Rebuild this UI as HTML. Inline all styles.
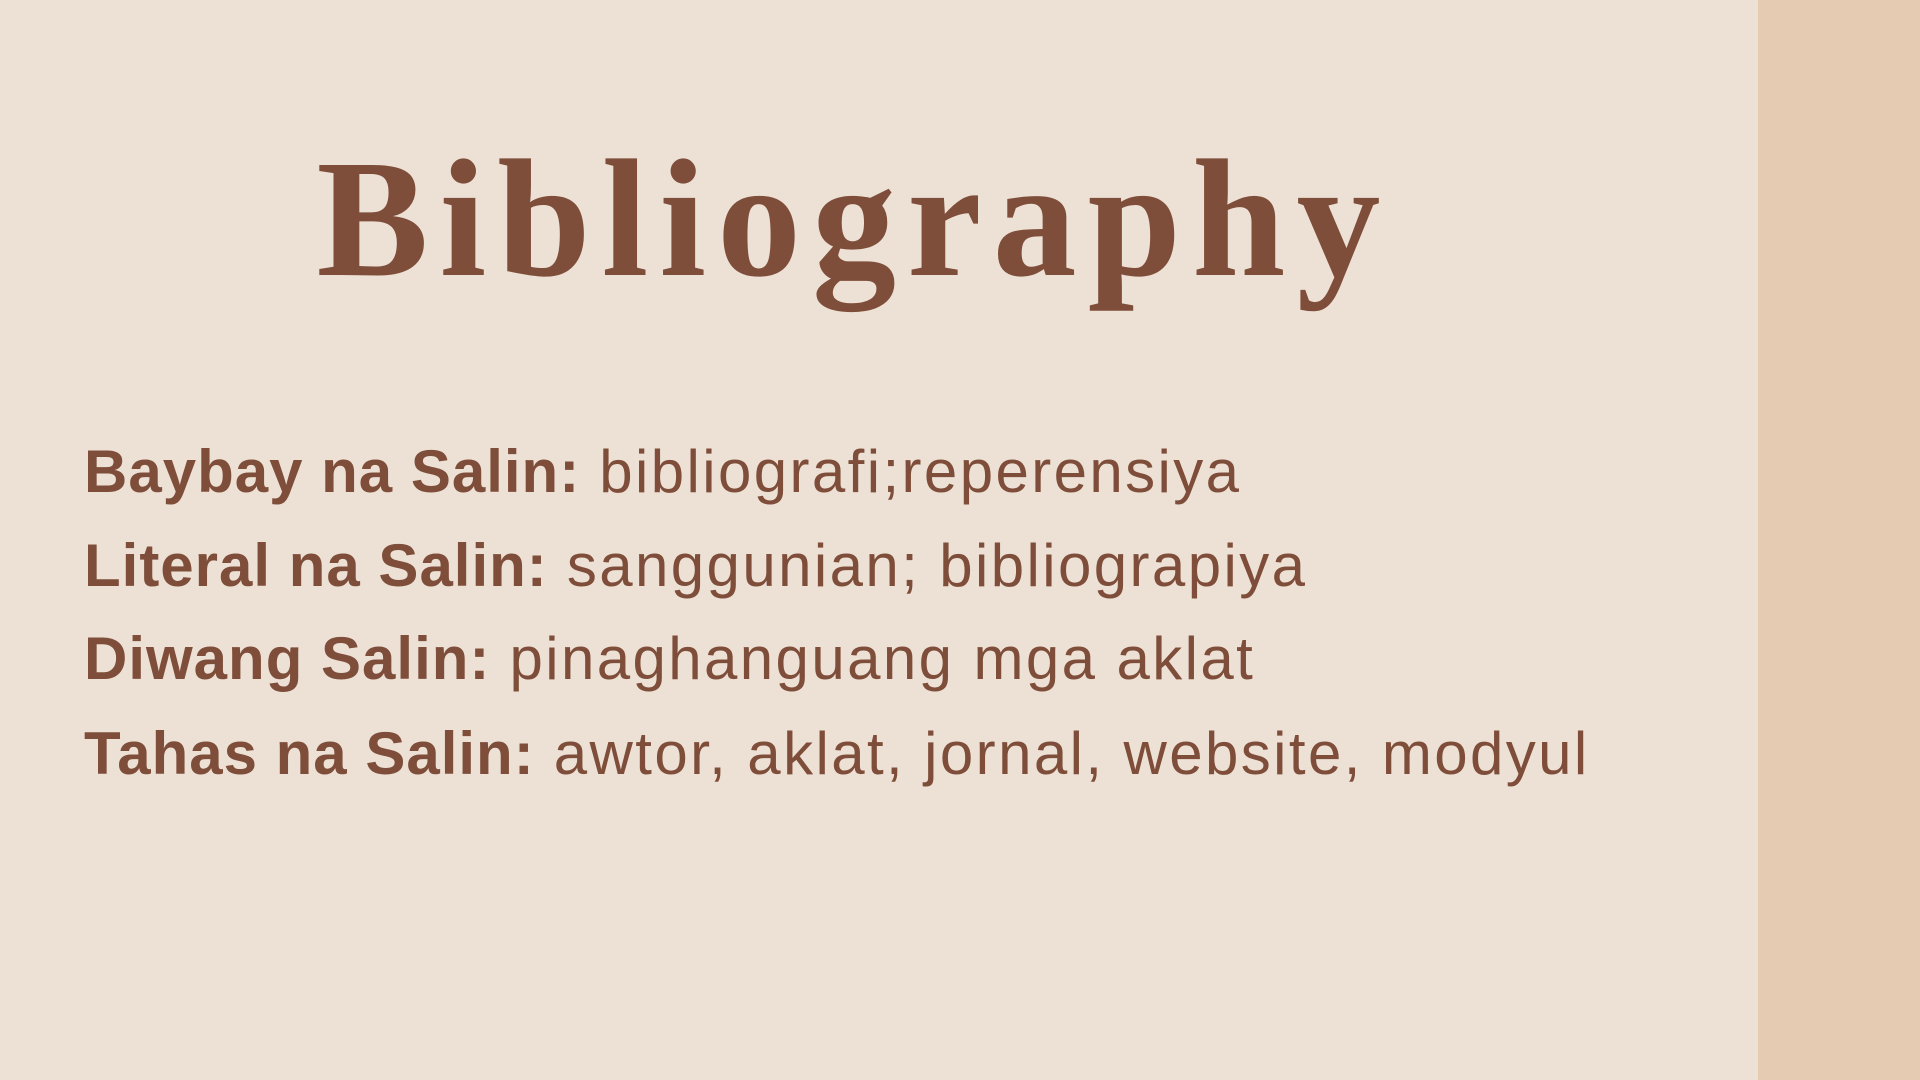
<!DOCTYPE html>
<html><head><meta charset="utf-8"><style>
html,body{margin:0;padding:0}
body{width:1920px;height:1080px;background:#ede1d6;position:relative;overflow:hidden;color:#7f4e3a}
.band{position:absolute;left:1758px;top:0;width:162px;height:1080px;background:#e4cbb1}
h1{position:absolute;left:0;width:1696px;padding-left:12px;box-sizing:border-box;top:99px;margin:0;text-align:center;font-family:"Liberation Serif",serif;font-weight:bold;font-size:168px;line-height:240px;letter-spacing:11px}
.l{position:absolute;left:84px;font-family:"Liberation Sans",sans-serif;font-size:60px;line-height:70px;white-space:nowrap;font-weight:300;letter-spacing:2.4px}
.l b{font-weight:bold;letter-spacing:1px}
</style></head><body>
<div class="band"></div>
<h1>Bibliography</h1>
<div class="l" style="top:437px"><b>Baybay na Salin:</b> bibliografi;reperensiya</div>
<div class="l" style="top:531px"><b>Literal na Salin:</b> sanggunian; bibliograpiya</div>
<div class="l" style="top:624px"><b>Diwang Salin:</b> pinaghanguang mga aklat</div>
<div class="l" style="top:719px"><b>Tahas na Salin:</b> awtor, aklat, jornal, website, modyul</div>
</body></html>
